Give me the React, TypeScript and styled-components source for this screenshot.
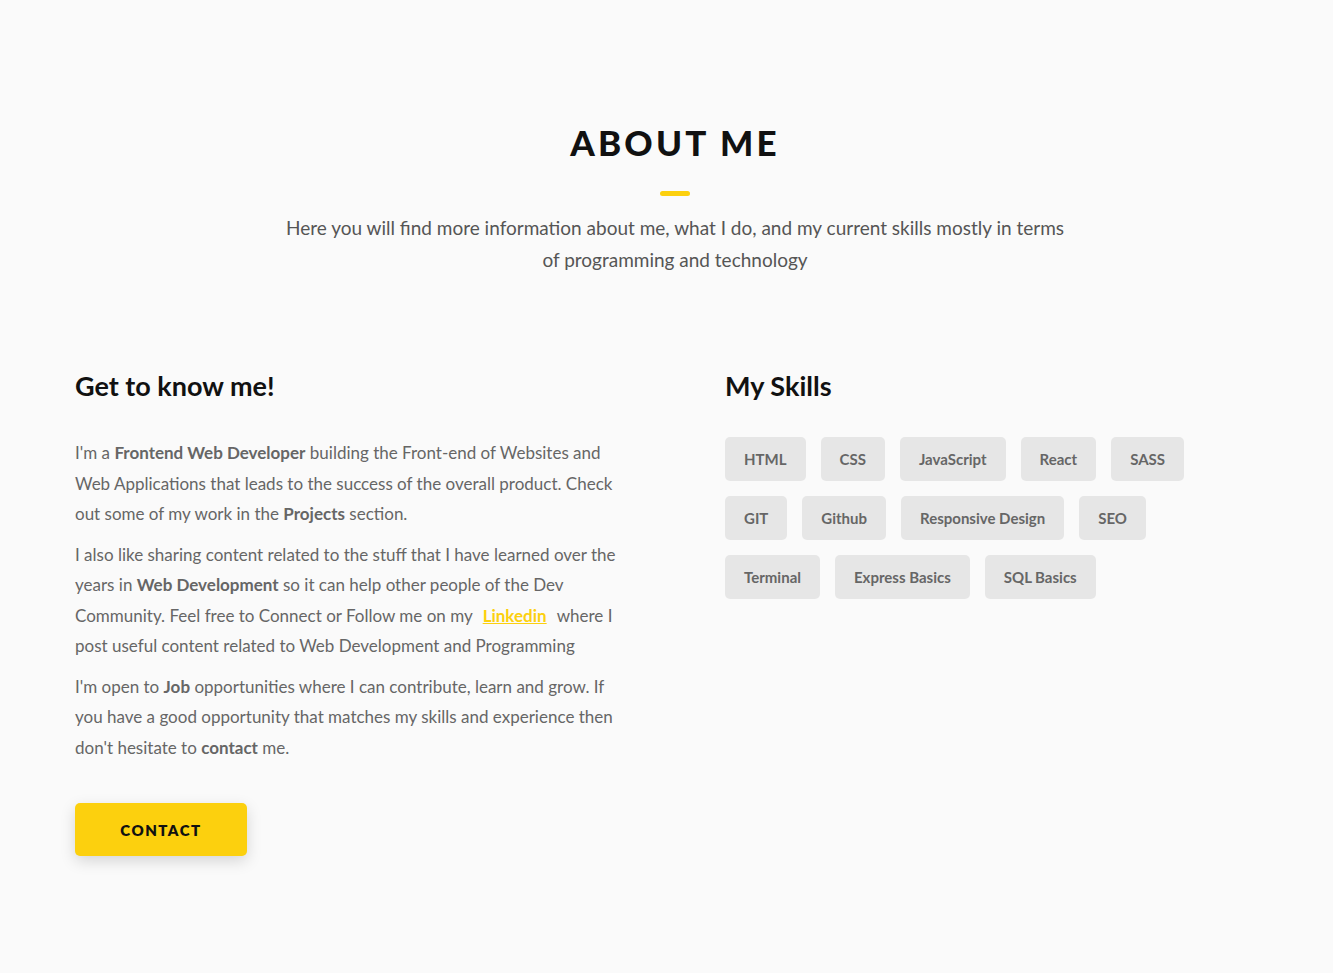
import React from "react";
import styled, { createGlobalStyle } from "styled-components";

const Global = createGlobalStyle`
  * { box-sizing: border-box; }
  html, body { margin: 0; padding: 0; background: #fafafa; }
  body { font-family: "Lato", "Noto Sans", sans-serif; color: #111; }
`;

const Section = styled.section`
  padding: 121px 0 100px;
  background: #fafafa;
`;

const Container = styled.div`
  width: 1200px;
  margin-left: 75px;
`;

const Header = styled.header`
  display: flex;
  flex-direction: column;
  align-items: center;
  text-align: center;
`;

const Title = styled.h2`
  margin: 0;
  font-size: 35px;
  font-weight: 900;
  letter-spacing: 3.2px;
  line-height: 42px;
  color: #111;
  text-transform: uppercase;
`;

const Underline = styled.div`
  width: 30px;
  height: 5px;
  border-radius: 3px;
  background: #fcd00e;
  margin: 28px 0 16px;
`;

const Subtitle = styled.p`
  margin: 0;
  max-width: 800px;
  font-size: 19px;
  line-height: 32px;
  color: #555;
`;

const Grid = styled.div`
  display: grid;
  grid-template-columns: 1fr 1fr;
  column-gap: 100px;
  margin-top: 93px;
`;

const Column = styled.div`
  display: flex;
  flex-direction: column;
`;

const ColTitle = styled.h3<{ $gap: number }>`
  margin: 0 0 ${(p) => p.$gap}px;
  font-size: 27px;
  font-weight: 700;
  line-height: 34px;
  color: #111;
`;

const Para = styled.p`
  margin: 0 0 10px;
  font-size: 17px;
  line-height: 30.5px;
  color: #666;
  & strong { font-weight: 700; }
`;

const Link = styled.a`
  color: #fcd00e;
  font-weight: 700;
  padding: 0 6px;
  text-decoration: underline;
`;

const Button = styled.a`
  display: inline-flex;
  align-items: center;
  justify-content: center;
  align-self: flex-start;
  width: 172px;
  height: 53px;
  margin-top: 30px;
  background: #fcd00e;
  border-radius: 5px;
  box-shadow: 0 5px 15px rgba(0, 0, 0, 0.15);
  font-size: 15px;
  font-weight: 800;
  letter-spacing: 1.5px;
  color: #111;
  text-decoration: none;
`;

const Skills = styled.div`
  display: flex;
  flex-wrap: wrap;
  gap: 15px;
  max-width: 520px;
`;

const Skill = styled.div`
  height: 44px;
  display: flex;
  align-items: center;
  padding: 0 19px;
  background: #e6e6e6;
  border-radius: 5px;
  font-size: 15px;
  font-weight: 700;
  color: #666;
`;

const skills = [
  "HTML", "CSS", "JavaScript", "React", "SASS",
  "GIT", "Github", "Responsive Design", "SEO",
  "Terminal", "Express Basics", "SQL Basics",
];

export default function App() {
  return (
    <>
      <Global />
      <Section>
        <Container>
          <Header>
            <Title>About Me</Title>
            <Underline />
            <Subtitle>
              Here you will find more information about me, what I do, and my current skills mostly in terms of programming and technology
            </Subtitle>
          </Header>
          <Grid>
            <Column>
              <ColTitle $gap={35}>Get to know me!</ColTitle>
              <Para>
                I'm a <strong>Frontend Web Developer</strong> building the Front-end of Websites and Web Applications that leads to the success of the overall product. Check out some of my work in the <strong>Projects</strong> section.
              </Para>
              <Para>
                I also like sharing content related to the stuff that I have learned over the years in <strong>Web Development</strong> so it can help other people of the Dev Community. Feel free to Connect or Follow me on my <Link href="#">Linkedin</Link> where I post useful content related to Web Development and Programming
              </Para>
              <Para>
                I'm open to <strong>Job</strong> opportunities where I can contribute, learn and grow. If you have a good opportunity that matches my skills and experience then don't hesitate to <strong>contact</strong> me.
              </Para>
              <Button href="#">CONTACT</Button>
            </Column>
            <Column>
              <ColTitle $gap={34}>My Skills</ColTitle>
              <Skills>
                {skills.map((s) => (
                  <Skill key={s}>{s}</Skill>
                ))}
              </Skills>
            </Column>
          </Grid>
        </Container>
      </Section>
    </>
  );
}
